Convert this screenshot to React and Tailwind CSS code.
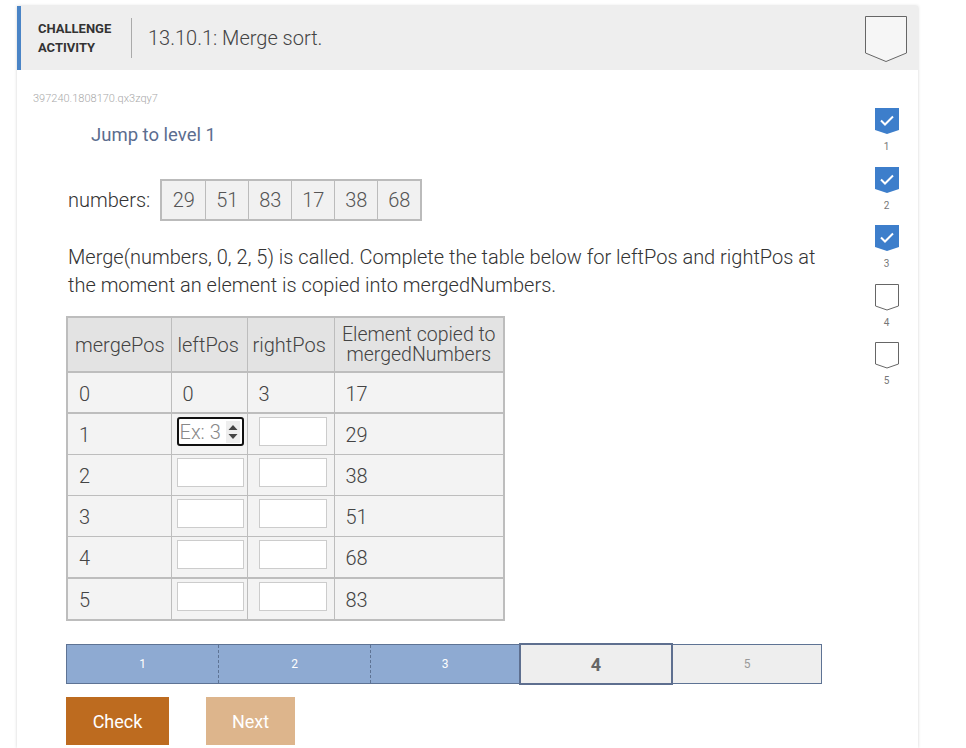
import React from "react";

const numbers = [29, 51, 83, 17, 38, 68];

const rows = [
  { pos: 0, left: "0", right: "3", el: 17 },
  { pos: 1, el: 29, focus: true },
  { pos: 2, el: 38 },
  { pos: 3, el: 51 },
  { pos: 4, el: 68 },
  { pos: 5, el: 83 },
];

const levels = [
  { n: 1, done: true },
  { n: 2, done: true },
  { n: 3, done: true },
  { n: 4, done: false },
  { n: 5, done: false },
];

// light text face (installed as its own family)
const light = "font-['Roboto_Light',Roboto,sans-serif]";

// small bookmark-shaped level marker
const LevelMark = ({ done }) => (
  <svg width="24" height="27" viewBox="0 0 24 27">
    {done ? (
      <>
        <path d="M0 0 H24 V22 L12 26 L0 22 Z" fill="#3d7ecb" />
        <path d="M6 12.5 L10 16.5 L18 8.5" fill="none" stroke="#fff" strokeWidth="2" />
      </>
    ) : (
      <path d="M0.5 0.5 H23.5 V22 L12 26 L0.5 22 Z" fill="#fff" stroke="#666" strokeWidth="1" />
    )}
  </svg>
);

const Cell = ({ children, className = "" }) => (
  <td className={`border border-[#bdbdbd] px-[11px] align-top ${className}`}>{children}</td>
);

const App = () => {
  return (
    <div className="min-h-screen bg-white pt-[6px] pl-[17px] font-['Roboto','Liberation_Sans',sans-serif]">
      <div className="w-[901px] min-h-[742px] bg-white shadow-[0_0_3px_rgba(0,0,0,0.18)]">
        {/* Header */}
        <header className="h-[64px] bg-[#eeeeee] border-l-4 border-[#4a84c6] flex items-center">
          <div className="pl-[17px] w-[110px] text-[13px] font-bold leading-[19px] text-[#333]">
            CHALLENGE
            <br />
            ACTIVITY
          </div>
          <div className="w-px h-[40px] bg-[#aaa]" />
          <h1 className={`ml-[16px] text-[20px] text-[#444] flex-1 ${light}`}>
            13.10.1: Merge sort.
          </h1>
          <svg width="42" height="47" viewBox="0 0 42 47" className="mr-[11px] mt-[2px]">
            <path d="M0.5 0.5 H41.5 V37 L21 45.5 L0.5 37 Z" fill="#f6f6f6" stroke="#666" strokeWidth="1" />
          </svg>
        </header>

        <div className="flex">
          {/* Main */}
          <main className="flex-1 pl-[16px]">
            <div className={`pt-[22px] text-[11px] leading-[14px] text-[#aaa] ${light}`}>
              397240.1808170.qx3zqy7
            </div>
            <div className="mt-[17px] pl-[58px] text-[18.5px] leading-[24px] text-[#5b6d8f]">
              Jump to level 1
            </div>

            <div className={`mt-[32px] pl-[35px] flex items-center text-[20px] text-[#333] ${light}`}>
              <span className="mr-[10px]">numbers:</span>
              <div className="flex border-2 border-[#bbb] bg-[#f1f1f1]">
                {numbers.map((n, i) => (
                  <div
                    key={i}
                    className={`w-[43px] h-[38px] flex items-center justify-center text-[#555] ${
                      i > 0 ? "border-l border-[#bbb]" : ""
                    }`}
                  >
                    {n}
                  </div>
                ))}
              </div>
            </div>

            <p className={`mt-[22px] pl-[35px] w-[800px] text-[20px] leading-[28px] text-[#333] ${light}`}>
              Merge(numbers, 0, 2, 5) is called. Complete the table below for leftPos and rightPos at
              the moment an element is copied into mergedNumbers.
            </p>

            <table
              className={`mt-[17px] ml-[33px] w-[437px] table-fixed border-collapse border-2 border-[#bdbdbd] text-[20px] text-[#444] ${light}`}
            >
              <thead>
                <tr className="bg-[#e3e3e3] h-[55px]">
                  <th className="border border-[#bdbdbd] border-b-2 w-[104px] px-[7px] font-normal text-left">
                    mergePos
                  </th>
                  <th className="border border-[#bdbdbd] border-b-2 w-[76px] px-[6px] font-normal text-left">
                    leftPos
                  </th>
                  <th className="border border-[#bdbdbd] border-b-2 w-[87px] px-[5px] font-normal text-left">
                    rightPos
                  </th>
                  <th className="border border-[#bdbdbd] border-b-2 w-[170px] px-[4px] font-normal text-center text-[19.5px] leading-[20px]">
                    Element copied to
                    <br />
                    mergedNumbers
                  </th>
                </tr>
              </thead>
              <tbody className="bg-[#f3f3f3]">
                {rows.map((r) => (
                  <tr
                    key={r.pos}
                    className={`h-[41px] ${r.pos === 1 || r.pos === 5 ? "border-t-2 border-[#bdbdbd]" : ""}`}
                  >
                    <Cell className="pt-[6px]">{r.pos}</Cell>
                    {r.left !== undefined ? (
                      <>
                        <Cell className="pt-[6px]">{r.left}</Cell>
                        <Cell className="pt-[6px]">{r.right}</Cell>
                      </>
                    ) : (
                      <>
                        <td className="border border-[#bdbdbd] pl-[5px] pr-[2px] pt-[3px] pb-[8px] align-top">
                          {r.focus ? (
                            <div className="w-[67px] h-[29px] border-2 border-[#111] rounded-[3px] bg-white flex items-center pl-[1px] overflow-hidden">
                              <span className="text-[20px] text-[#888] flex-1 leading-none">Ex: 3</span>
                              <svg width="14" height="22" viewBox="0 0 14 22" className="mr-[2px]">
                                <rect width="14" height="22" fill="#eee" />
                                <path d="M2.5 9 L7 4 L11.5 9 Z" fill="#444" />
                                <path d="M2.5 13 L7 18 L11.5 13 Z" fill="#444" />
                              </svg>
                            </div>
                          ) : (
                            <div className="w-[67px] h-[29px] border border-[#ccc] bg-white" />
                          )}
                        </td>
                        <td className="border border-[#bdbdbd] pl-[11px] pr-[6px] pt-[3px] pb-[8px] align-top">
                          <div className="w-[68px] h-[29px] border border-[#ccc] bg-white" />
                        </td>
                      </>
                    )}
                    <Cell className="pt-[6px]">{r.el}</Cell>
                  </tr>
                ))}
              </tbody>
            </table>

            {/* Level progress */}
            <div className="mt-[23px] ml-[33px] w-[756px] h-[40px] flex text-white">
              <div className="w-[453px] flex bg-[#8eaad2] border-y border-l border-[#5e7394] text-[12px]">
                <div className="w-[151px] flex items-center justify-center">1</div>
                <div className="w-0 border-l border-dashed border-[#5e7394]" />
                <div className="w-[151px] flex items-center justify-center">2</div>
                <div className="w-0 border-l border-dashed border-[#5e7394]" />
                <div className="flex-1 flex items-center justify-center">3</div>
              </div>
              <div className="w-[154px] h-[42px] mt-[-1px] bg-[#eeeeee] border-2 border-[#5e6f8f] flex items-center justify-center text-[18px] font-bold text-[#666]">
                4
              </div>
              <div className="flex-1 bg-[#eeeeee] border-y border-r border-[#5e7394] flex items-center justify-center text-[12px] text-[#999]">
                5
              </div>
            </div>

            <div className="mt-[13px] ml-[33px] flex gap-[37px]">
              <button className="w-[103px] h-[48px] bg-[#bd6b1f] text-white text-[18px]">Check</button>
              <button className="w-[89px] h-[48px] bg-[#ddb58c] text-white text-[18px]">Next</button>
            </div>
          </main>

          {/* Level markers */}
          <aside className="w-[63px] pt-[38px] flex flex-col items-center">
            {levels.map((l) => (
              <div key={l.n} className="flex flex-col items-center h-[58.5px]">
                <LevelMark done={l.done} />
                <span className="text-[10px] leading-[12px] mt-[6px] text-[#777]">{l.n}</span>
              </div>
            ))}
          </aside>
        </div>
      </div>
    </div>
  );
};

export default App;
